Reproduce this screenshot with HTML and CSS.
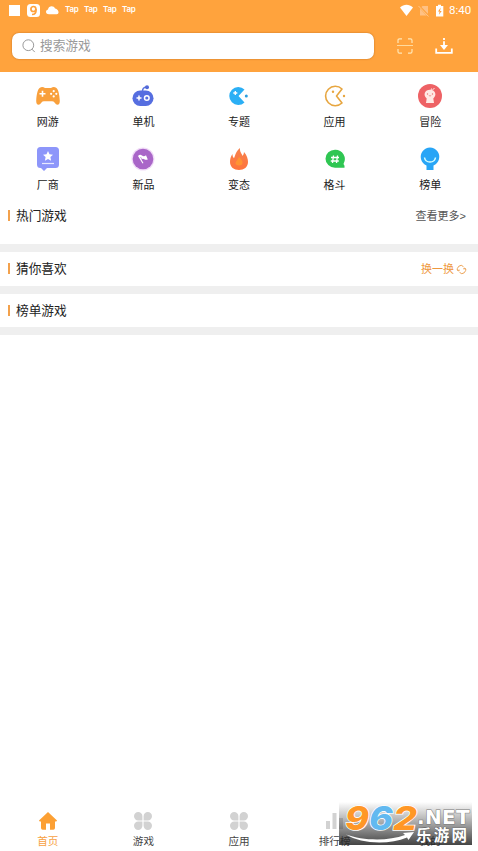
FILE: index.html
```html
<!DOCTYPE html>
<html lang="zh-CN">
<head>
<meta charset="utf-8">
<title>游戏</title>
<link rel="stylesheet" href="styles.css">
</head>
<body>
<div class="app">
  <header class="top">
    <div class="status">
      <div class="status-left">
        <svg width="60" height="14" viewBox="0 0 60 14"><rect x="9" y="1" width="11" height="11" fill="#fff"/><rect x="27" y="0" width="13" height="13" rx="3.5" fill="#fff"/><circle cx="33.4" cy="5" r="2.500" fill="none" stroke="#ffa23c" stroke-width="1.700"/><path d="M36 5c.3 3.700-1 5.500-4 5.500" fill="none" stroke="#ffa23c" stroke-width="1.700"/><path d="M49 10.200c-3.500 0-4-4.200-1-4.800C48.500 1.500 54 1.300 55 4.500c3 0 5.500 5.700 1.500 5.700z" fill="#fff"/></svg>
        <span class="tap">Tap</span><span class="tap">Tap</span><span class="tap">Tap</span><span class="tap">Tap</span>
      </div>
      <div class="status-right">
        <svg width="46" height="14" viewBox="0 0 46 14"><path d="M0 3.500C4-.2 9-.2 13 3.500L6.500 12z" fill="#fff"/><path d="M20 4.500L22.500 2H28v9.500h-8z" fill="#ffc184"/><path d="M18.500 1.500l10.500 11" stroke="#ffa23c" stroke-width="2.200"/><path d="M18.500 2l10 10.500" stroke="#ffc78a" stroke-width="1"/><path d="M36 2h2V.8h3V2h2.300v10.500H36z" fill="#fff"/><path d="M40.700 3.500L38 7.500h1.600l-.7 3.300L41.700 7H40z" fill="#ff9c38"/></svg>
        <span class="time">8:40</span>
      </div>
    </div>
    <div class="searchrow">
      <div class="search">
        <svg width="14" height="14" viewBox="0 0 14 14" fill="none" stroke="#999"><circle cx="6.300" cy="6.200" r="5.400"/><path d="M10 10.300l2.500 2.500" stroke-linecap="round"/></svg>
        <span>搜索游戏</span>
      </div>
      <svg class="scan" width="16" height="16" viewBox="0 0 16 16" fill="none" stroke="#ffe8b8" stroke-width="1.200"><path d="M1 5V2.500Q1 .8 2.500.8H5M11 .8h2.500Q15 .8 15 2.500V5M15 11v2.500q0 1.700-1.500 1.700H11M5 15.200H2.500Q1 15.200 1 13.500V11"/><path d="M0 7.500h16" stroke-width=".8"/></svg>
      <svg class="down" width="18" height="18" viewBox="0 0 18 18" fill="none" stroke="#fff" stroke-width="1.800"><path d="M1.200 11.500V15.800h15.600v-4.300"/><path d="M9 1v2M9 4.300V10"/><path d="M5 8h8L9 13z" fill="#fff" stroke="none"/></svg>
    </div>
  </header>

  <nav class="cats">
    <div class="cat"><svg viewBox="0 0 24 24"><path d="M5 3.200q2-.6 4 .9h6q2-1.500 4-.9c3 .3 4.500 6.500 4.800 13.800q0 3.700-2.300 3.700-1.500 0-3-2.300-.8-1.200-2.500-1.200H8q-1.700 0-2.500 1.200-1.500 2.300-3 2.300Q.2 20.700.2 17C.5 9.700 2 3.500 5 3.200z" fill="#f9a03c"/><path d="M6.500 6.800v6M3.500 9.800h6" stroke="#fff" stroke-width="1.600"/><g fill="#fff"><circle cx="17.700" cy="7.200" r="1.100"/><circle cx="17.700" cy="12.400" r="1.100"/><circle cx="15.100" cy="9.800" r="1.100"/><circle cx="20.300" cy="9.800" r="1.100"/></g></svg><span>网游</span></div>
    <div class="cat"><svg viewBox="0 0 24 24"><path d="M11.500 7q0-3.500 4-4" fill="none" stroke="#5b74dd" stroke-width="1.500"/><circle cx="16" cy="3.300" r="2" fill="#5269d8"/><rect x="1.500" y="6.500" width="21" height="15.500" rx="7.700" fill="#566ee0"/><path d="M8 11.500v5M5.500 14h5" stroke="#fff" stroke-width="1.500"/><circle cx="15.800" cy="14" r="2.300" fill="none" stroke="#fff" stroke-width="1.500"/></svg><span>单机</span></div>
    <div class="cat"><svg viewBox="0 0 24 24"><path d="M17.500 5.500A9 9 0 1 0 17.500 18.500L11.500 12z" fill="#2baff5"/><path d="M8.300 7v4M6.300 9h4" stroke="#fff" stroke-width="1.300"/><circle cx="19.300" cy="12" r="1.500" fill="#2b9fe0"/></svg><span>专题</span></div>
    <div class="cat"><svg viewBox="0 0 24 24"><path d="M19 5A9.700 9.700 0 1 0 19 19L13.500 12z" fill="none" stroke="#e7a640" stroke-width="1.600" stroke-linejoin="round"/><circle cx="10" cy="7.800" r="1.200" fill="#e7a640"/><circle cx="21" cy="12" r="1.200" fill="#e7a640"/></svg><span>应用</span></div>
    <div class="cat"><svg viewBox="0 0 24 24"><circle cx="12" cy="12" r="12" fill="#ee6265"/><path d="M8 19l.7-4.500C4.500 11 7 5.800 12 5.800s7.500 5.200 3.300 8.700L16 19z" fill="#ffe9e5"/><path d="M13 6.500l.5-2M14 6.500l2.500-2.500" stroke="#ffe9e5"/><circle cx="9.500" cy="10" r=".7" fill="#e97573"/><circle cx="14.500" cy="10" r=".7" fill="#e97573"/><path d="M10.800 11.500q1.200 1 2.400 0" fill="none" stroke="#e97573" stroke-width=".7"/></svg><span>冒险</span></div>
    <div class="cat"><svg viewBox="0 0 24 24"><path d="M4.500 0h15Q23 0 23 3.500v14q0 3.500-3.500 3.500H11l-3 3-3-3h-.5Q1 21 1 17.500v-14Q1 0 4.500 0z" fill="#8d96fa"/><path d="M12 4l1.500 3.300 3.500.4-2.600 2.400.7 3.600-3.100-1.800-3.100 1.800.7-3.600L7 7.700l3.500-.4z" fill="#fff"/><path d="M6 16.500h12" stroke="#e8e9ff" stroke-width="1.200"/></svg><span>厂商</span></div>
    <div class="cat"><svg viewBox="0 0 24 24"><circle cx="12" cy="12" r="11.500" fill="#f1dcf7"/><circle cx="12" cy="12" r="10.300" fill="#a966c8"/><path d="M7 9q2-2 4-.5t4-.3l1.800 4.300q-2 .7-3.500-.3t-3 .4l2.200 3.400-1 .4z" fill="#fff"/><path d="M9.500 10l1.500 2.500" fill="none" stroke="#a966c8" stroke-width=".6"/></svg><span>新品</span></div>
    <div class="cat"><svg viewBox="0 0 24 24"><defs><linearGradient id="fire" x2="0" y2="1"><stop stop-color="#f6824e"/><stop offset="1" stop-color="#ff743b"/></linearGradient></defs><path d="M13 1c-.5 4 2 5.500 2.500 8Q17 7.500 17 5c3 3.500 4 7 4 10 0 5-4 8-9 8s-9-3-9-8c0-3 .5-5 2.500-8 0 2 .3 3 1.500 4.200C8.500 8 9 4 13 1z" fill="url(#fire)"/><path d="M12 10c3 3 4.500 5 3 7.500q-3 2-6 0c-1.500-2 1.500-4.500 3-7.500z" fill="#ff9432"/></svg><span>变态</span></div>
    <div class="cat"><svg viewBox="0 0 24 24"><path d="M12 2.700a9.500 9 0 1 0 0 18h9.500v-2l-1-1.700A9.500 9.500 0 0 0 12 2.700z" fill="#2fc653"/><path d="M10.500 8.500L9.500 16M14.500 8.500l-1 7.500M8 10.500h8M7.800 14h8" stroke="#fff" stroke-width="1.300"/></svg><span>格斗</span></div>
    <div class="cat"><svg viewBox="0 0 24 24"><path d="M8.500 18.500a9.300 9.300 0 1 1 7 0V23h-7z" fill="#28a5f6"/><path d="M6.500 10.500c1 6 10 6 11 0" fill="none" stroke="#d9ffff" stroke-width="1.500"/></svg><span>榜单</span></div>
  </nav>

  <section class="sec first"><h2>热门游戏</h2><a class="more">查看更多&gt;</a></section>
  <section class="sec second"><h2>猜你喜欢</h2><a class="swap">换一换<svg width="9" height="9" viewBox="0 0 9 9" fill="none" stroke="#eda254"><path d="M1.300 6A3.300 3.300 0 0 1 6.500 1.700M7.700 3A3.300 3.300 0 0 1 2.500 7.300M0 4.500L1.300 6 2.800 5M6.200 4l1.500-1L9 4.500"/></svg></a></section>
  <section class="sec third"><h2>榜单游戏</h2></section>

  <main class="blank"></main>

  <footer class="tabs">
    <div class="tab active"><svg viewBox="0 0 18 18"><path d="M9 0l9 8.500q0 1-1.200 1H16V16q0 1.700-1.700 1.700H11v-6.200H7v6.200H3.700Q2 17.700 2 16V9.500h-.8Q0 9.500 0 8.500z" fill="#fca034"/></svg><span>首页</span></div>
    <div class="tab"><svg viewBox="0 0 18 18" fill="#d2d2d2"><path d="M4.200 0a4.200 4.200 0 1 0 0 8.400h4.200V4.200A4.200 4.200 0 0 0 4.200 0zM13.800 0a4.200 4.200 0 1 1 0 8.400H9.600V4.200A4.200 4.200 0 0 1 13.800 0zM4.200 18a4.200 4.200 0 1 1 0-8.400h4.200v4.200A4.200 4.200 0 0 1 4.200 18zM13.800 18a4.200 4.200 0 1 0 0-8.400H9.600v4.200A4.200 4.200 0 0 0 13.800 18z"/></svg><span>游戏</span></div>
    <div class="tab"><svg viewBox="0 0 18 18" fill="#d2d2d2"><path d="M4.200 0a4.200 4.200 0 1 0 0 8.400h4.200V4.200A4.200 4.200 0 0 0 4.200 0zM13.800 0a4.200 4.200 0 1 1 0 8.400H9.600V4.200A4.200 4.200 0 0 1 13.800 0zM4.200 18a4.200 4.200 0 1 1 0-8.400h4.200v4.200A4.200 4.200 0 0 1 4.200 18zM13.800 18a4.200 4.200 0 1 0 0-8.400H9.600v4.200A4.200 4.200 0 0 0 13.800 18z"/></svg><span>应用</span></div>
    <div class="tab"><svg viewBox="0 0 18 18" fill="#d2d2d2"><path d="M0 9h4v8H0zM6.500 1h4v16h-4zM13 6h4v11h-4z"/></svg><span>排行榜</span></div>
    <div class="tab"><svg viewBox="0 0 18 18"></svg><span>我的</span></div>
  </footer>

  <div class="mark">
    <svg width="133" height="43" viewBox="0 0 133 43">
      <path d="M7 32.500c16 6 42 7 59 .5l-2-2 11-1-5.500 8-1.500-2.500C50 43 22 42 7 32.500z" fill="#fff"/>
      <g class="digits"><text x="6" y="27.500" textLength="24" lengthAdjust="spacingAndGlyphs" fill="#ff9726">9</text><text x="30" y="27.500" textLength="24" lengthAdjust="spacingAndGlyphs" fill="#62b9f0">6</text><text x="54" y="27.500" textLength="24" lengthAdjust="spacingAndGlyphs" fill="#ff9726">2</text></g>
      <text class="net" x="78" y="22">.NET</text>
      <text class="site" x="77" y="39" textLength="51">乐游网</text>
    </svg>
  </div>
</div>
</body>
</html>
```
FILE: styles.css
```css
* { box-sizing: border-box; }
body { margin: 0; background: #fff; font-family: "Liberation Sans", "Noto Sans CJK SC", sans-serif; color: #222; }
svg { display: block; flex: none; overflow: visible; }
.app { position: relative; width: 478px; height: 851px; display: flex; flex-direction: column; overflow: hidden; }

.top { height: 72px; background: #ffa33d; flex: none; }
.status { height: 33px; padding: 4px 6px 0 0; display: flex; justify-content: space-between; align-items: flex-start; }
.status-left, .status-right { display: flex; }
.status-left { gap: 5px; }
.tap { width: 14px; font: 600 8px/11px Inter, sans-serif; letter-spacing: -.3px; color: #fff; }
.status-right { gap: 3px; }
.time { font: 400 11.5px/13px Roboto, sans-serif; color: #fff; width: 23px; white-space: nowrap; }
.searchrow { display: flex; align-items: center; padding-left: 12px; height: 26px; }
.search { width: 362px; height: 26px; border-radius: 7px; background: #fff; box-shadow: 0 0 2px #b96d20; display: flex; align-items: center; gap: 4px; padding-left: 10px; font-size: 12.7px; line-height: 18px; color: #999; }
.scan { margin-left: 23px; }
.down { margin-left: 22px; }

.cats { display: grid; grid-template-columns: repeat(5, 1fr); grid-auto-rows: 63px; padding-top: 12px; height: 126px; flex: none; }
.cat { display: flex; flex-direction: column; align-items: center; gap: 6px; font-size: 11px; line-height: 16px; }
.cat svg { width: 24px; height: 24px; }

.sec { flex: none; display: flex; justify-content: space-between; padding: 0 12px 0 8px; border-bottom: 8px solid #efefef; }
.first { height: 54px; padding-top: 8px; }
.second { height: 42px; padding-top: 7px; }
.third { height: 41px; padding-top: 7px; }
.sec h2 { margin: 0; display: flex; align-items: center; gap: 6px; height: 20px; font-size: 12.7px; font-weight: 400; line-height: 20px; }
.sec h2::before { content: ""; width: 2px; height: 11px; margin-bottom: 2px; background: #f3a14c; }
.more, .swap { font-size: 11px; line-height: 20px; height: 20px; color: #555; }
.swap { color: #ee983e; display: flex; align-items: center; gap: 3px; }

.blank { flex: 1; }
.tabs { height: 51px; flex: none; padding-top: 12px; display: grid; grid-template-columns: repeat(5, 1fr); }
.tab { display: flex; flex-direction: column; align-items: center; gap: 3px; font-size: 10.6px; line-height: 16px; color: #444; }
.tab svg { width: 18px; height: 18px; }
.active { color: #f7a143; }

.mark { position: absolute; left: 339px; top: 802px; width: 133px; height: 43px; background: linear-gradient(rgba(90,90,90,0), rgba(75,75,75,.5) 50%, rgba(35,35,35,.85)); }
.digits text { font: italic 800 33px Inter, "Liberation Sans", sans-serif; stroke: #fff; stroke-width: 1.5px; paint-order: stroke; }
.net { font: bold 20px "DejaVu Sans", sans-serif; letter-spacing: .3px; fill: #fff; stroke: #777; stroke-width: 1px; paint-order: stroke; }
.site { font: bold 15.5px "Noto Sans CJK SC", sans-serif; fill: #fff; stroke: #555; stroke-width: .7px; paint-order: stroke; }
```
